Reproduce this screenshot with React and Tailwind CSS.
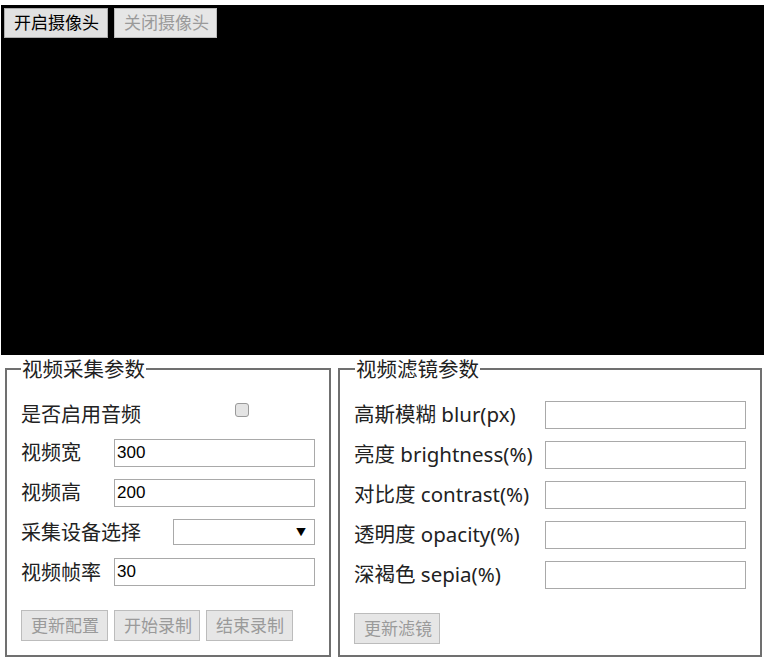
import React from "react";

const font = { fontFamily: '"Noto Sans", "Noto Sans CJK SC", sans-serif' };

function Btn({ children, disabled, className = "" }) {
  return (
    <button
      disabled={disabled}
      className={
        "h-[30px] px-[9px] border border-[#adadad] bg-[#e1e1e1] text-[17px] leading-[28px] whitespace-nowrap " +
        (disabled ? "text-[#9a9a9a] bg-[#e6e6e6] border-[#bcbcbc] " : "text-black ") +
        className
      }
      style={font}
    >
      {children}
    </button>
  );
}

function TextInput({ value, className = "" }) {
  return (
    <input
      defaultValue={value}
      className={
        "h-[28px] border border-[#a9a9a9] bg-white px-[2px] text-[17px] text-black outline-none " +
        className
      }
      style={{ fontFamily: '"Liberation Sans", Arial, sans-serif' }}
    />
  );
}

export default function App() {
  return (
    <div className="w-[770px] h-[664px] bg-white pt-[5px] pl-[1px]" style={font}>
      <div className="relative w-[763px] h-[350px] bg-black">
        <div className="absolute left-[3px] top-[3px] flex gap-[6px]">
          <Btn className="w-[104px]">开启摄像头</Btn>
          <Btn disabled className="w-[103px]">关闭摄像头</Btn>
        </div>
      </div>

      <div className="flex ml-[4px] mt-[2px] gap-[7px]">
        {/* Left fieldset */}
        <fieldset className="w-[326px] h-[300px] border-2 border-solid border-[#707070] px-[14px] pt-[15px]">
          <legend className="px-[1px] text-[20.5px] leading-[24px] text-[#222]">视频采集参数</legend>
          <div className="flex flex-col text-[20px] text-[#222]">
            <div className="flex items-center h-[37px]">
              <span className="w-[214px] shrink-0 leading-[24px]">是否启用音频</span>
              <span className="w-[14px] h-[14px] mt-[-9px] rounded-[3px] border border-[#9a9a9a] bg-[#e4e4e4]" />
            </div>
            <div className="flex items-center h-[40px]">
              <span className="w-[93px] shrink-0 leading-[24px]">视频宽</span>
              <TextInput value="300" className="w-[201px]" />
            </div>
            <div className="flex items-center h-[40px]">
              <span className="w-[93px] shrink-0 leading-[24px]">视频高</span>
              <TextInput value="200" className="w-[201px]" />
            </div>
            <div className="flex items-center h-[40px]">
              <span className="w-[152px] shrink-0 leading-[24px]">采集设备选择</span>
              <div className="relative w-[142px] h-[26px] mt-[-3px] border border-[#a9a9a9] bg-white">
                <span className="absolute right-[8px] top-[5px] text-[10px] leading-[14px] text-black">▼</span>
              </div>
            </div>
            <div className="flex items-center h-[40px]">
              <span className="w-[93px] shrink-0 leading-[24px]">视频帧率</span>
              <TextInput value="30" className="w-[201px] mt-[-3px]" />
            </div>
            <div className="flex gap-[6px] mt-[17px]">
              <Btn disabled className="w-[87px] h-[31px]">更新配置</Btn>
              <Btn disabled className="w-[86px] h-[31px]">开始录制</Btn>
              <Btn disabled className="w-[87px] h-[31px]">结束录制</Btn>
            </div>
          </div>
        </fieldset>

        {/* Right fieldset */}
        <fieldset className="w-[424px] h-[300px] border-2 border-solid border-[#707070] px-[14px] pt-[13px]">
          <legend className="px-[1px] ml-[1px] text-[20.5px] leading-[24px] text-[#222]">视频滤镜参数</legend>
          <div className="flex flex-col text-[20.5px] text-[#222]">
            {[
              "高斯模糊 blur(px)",
              "亮度 brightness(%)",
              "对比度 contrast(%)",
              "透明度 opacity(%)",
              "深褐色 sepia(%)",
            ].map((l) => (
              <div key={l} className="flex items-center h-[40px]">
                <span className="w-[191px] shrink-0 leading-[24px] whitespace-nowrap">{l}</span>
                <TextInput value="" className="w-[201px] h-[27px] mt-[1px]" />
              </div>
            ))}
            <div className="flex mt-[19px]">
              <Btn disabled className="w-[86px] h-[31px]">更新滤镜</Btn>
            </div>
          </div>
        </fieldset>
      </div>
    </div>
  );
}
